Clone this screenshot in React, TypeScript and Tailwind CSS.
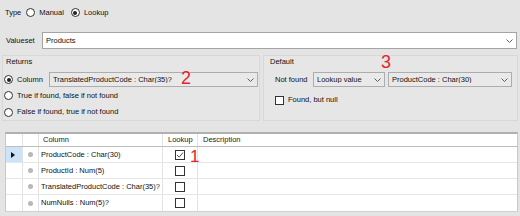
import React from 'react';

function Radio({ checked = false, className = '' }: { checked?: boolean; className?: string }) {
  return (
    <span
      className={`w-[9px] h-[9px] shrink-0 rounded-full border border-[#333] bg-white flex items-center justify-center ${className}`}
    >
      {checked && <span className="w-[4px] h-[4px] rounded-full bg-[#222]" />}
    </span>
  );
}

function Chevron() {
  return (
    <svg width="7" height="4" viewBox="0 0 7 4" className="shrink-0">
      <path d="M0.5 0.5 L3.5 3.5 L6.5 0.5" fill="none" stroke="#606060" strokeWidth="1" />
    </svg>
  );
}

function Combo({ text, className = '' }: { text: string; className?: string }) {
  return (
    <div
      className={`h-[15px] border border-[#adadad] bg-[#e9e9e9] flex items-center pl-[3px] pr-[3px] ${className}`}
    >
      <span className="flex-1 truncate">{text}</span>
      <Chevron />
    </div>
  );
}

function GridCheck({ checked = false }: { checked?: boolean }) {
  return (
    <span className="w-[10px] h-[10px] border border-[#333] bg-white flex items-center justify-center">
      {checked && (
        <svg width="8" height="8" viewBox="0 0 8 8">
          <path d="M1 4 L3.2 6.2 L7 1.6" fill="none" stroke="#555" strokeWidth="1" />
        </svg>
      )}
    </span>
  );
}

const rows = [
  { name: 'ProductCode : Char(30)', lookup: true, current: true },
  { name: 'ProductId : Num(5)', lookup: false, current: false },
  { name: 'TranslatedProductCode : Char(35)?', lookup: false, current: false },
  { name: 'NumNulls : Num(5)?', lookup: false, current: false },
];

export default function App() {
  return (
    <div className="relative w-[520px] h-[216px] overflow-hidden bg-[#e4e4e4] font-['Liberation_Sans',Arial,sans-serif] text-[7.5px] text-[#111] leading-none">
      {/* Type */}
      <div className="h-[25px] flex items-center pl-[5px]">
        <span>Type</span>
        <Radio className="ml-[5px]" />
        <span className="ml-[4px]">Manual</span>
        <Radio checked className="ml-[7px]" />
        <span className="ml-[4px]">Lookup</span>
      </div>

      {/* Valueset */}
      <div className="mt-[7px] h-[17px] flex items-center pl-[6px] pr-[3px]">
        <span className="w-[36px]">Valueset</span>
        <div className="flex-1 h-full bg-white border border-[#a4a4a4] flex items-center pl-[3px] pr-[3px]">
          <span className="flex-1">Products</span>
          <Chevron />
        </div>
      </div>

      {/* Returns / Default */}
      <div className="mt-[6px] h-[66px] flex gap-[3px] pl-[2px] pr-[2px]">
        <div className="w-[258px] border border-[#d8d8d8] bg-[#e6e6e6] flex flex-col">
          <div className="h-[11px] flex items-center pl-[3px]">Returns</div>
          <div className="mt-[5px] h-[15px] flex items-center pl-[1px] pr-[1px]">
            <Radio checked />
            <span className="ml-[4px] w-[32px]">Column</span>
            <Combo text="TranslatedProductCode : Char(35)?" className="flex-1" />
          </div>
          <div className="h-[17px] flex items-center pl-[1px]">
            <Radio />
            <span className="ml-[4px]">True if found, false if not found</span>
          </div>
          <div className="h-[16px] flex items-center pl-[1px]">
            <Radio />
            <span className="ml-[4px]">False if found, true if not found</span>
          </div>
        </div>

        <div className="flex-1 border border-[#d8d8d8] bg-[#e6e6e6] flex flex-col">
          <div className="h-[11px] flex items-center pl-[6px]">Default</div>
          <div className="mt-[5px] h-[15px] flex items-center pl-[11px]">
            <span className="w-[38px]">Not found</span>
            <Combo text="Lookup value" className="w-[72px]" />
            <Combo text="ProductCode : Char(30)" className="ml-[3px] w-[124px]" />
          </div>
          <div className="mt-[8px] h-[10px] flex items-center pl-[11px]">
            <span className="w-[9px] h-[9px] border border-[#333] bg-white" />
            <span className="ml-[4px]">Found, but null</span>
          </div>
        </div>
      </div>

      {/* Columns grid */}
      <div className="mt-[11px] ml-[5px] mr-[2px] bg-white border-t-2 border-t-[#b0b0b0] border-x border-x-[#c8c8c8] border-b border-b-[#d0d0d0]">
        <div className="h-[13px] grid grid-cols-[17px_16px_124px_35px_1fr] border-b border-[#bdbdbd] text-[#222]">
          <div className="border-r border-[#e2e2e2]" />
          <div className="border-r border-[#e2e2e2]" />
          <div className="border-r border-[#e2e2e2] flex items-center pl-[4px]">Column</div>
          <div className="border-r border-[#e2e2e2] flex items-center pl-[5px]">Lookup</div>
          <div className="flex items-center pl-[5px]">Description</div>
        </div>
        {rows.map((r) => (
          <div
            key={r.name}
            className="h-[16px] grid grid-cols-[17px_16px_124px_35px_1fr] border-b border-[#e6e6e6] last:border-b-0"
          >
            <div
              className={`border-r border-[#e2e2e2] flex items-center pl-[5px] ${r.current ? 'bg-[#cce4f7]' : ''}`}
            >
              {r.current && (
                <svg width="4" height="6" viewBox="0 0 4 6">
                  <path d="M0 0 L4 3 L0 6 Z" fill="#111" />
                </svg>
              )}
            </div>
            <div className="border-r border-[#e2e2e2] flex items-center justify-center">
              <span className="w-[5px] h-[5px] rounded-full bg-[#b8b8b8]" />
            </div>
            <div className="border-r border-[#e2e2e2] flex items-center pl-[2px] whitespace-nowrap">
              {r.name}
            </div>
            <div className="border-r border-[#e2e2e2] flex items-center justify-center">
              <GridCheck checked={r.lookup} />
            </div>
            <div />
          </div>
        ))}
      </div>

      {/* red annotations */}
      <span className="absolute left-[190px] top-[148px] text-[17px] text-[#e3242b]">1</span>
      <span className="absolute left-[181px] top-[69px] text-[18px] text-[#e3242b]">2</span>
      <span className="absolute left-[381px] top-[53px] text-[18px] text-[#e3242b]">3</span>
    </div>
  );
}
